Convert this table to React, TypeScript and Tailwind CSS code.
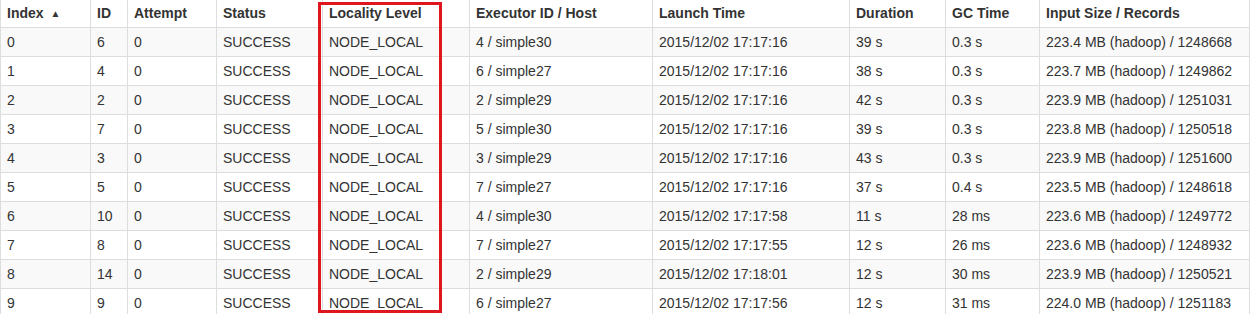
const headers = [
  'Index',
  'ID',
  'Attempt',
  'Status',
  'Locality Level',
  'Executor ID / Host',
  'Launch Time',
  'Duration',
  'GC Time',
  'Input Size / Records',
];

const widths = [90, 37, 89, 106, 147, 183, 197, 96, 94, 210];

const rows: string[][] = [
  ['0', '6', '0', 'SUCCESS', 'NODE_LOCAL', '4 / simple30', '2015/12/02 17:17:16', '39 s', '0.3 s', '223.4 MB (hadoop) / 1248668'],
  ['1', '4', '0', 'SUCCESS', 'NODE_LOCAL', '6 / simple27', '2015/12/02 17:17:16', '38 s', '0.3 s', '223.7 MB (hadoop) / 1249862'],
  ['2', '2', '0', 'SUCCESS', 'NODE_LOCAL', '2 / simple29', '2015/12/02 17:17:16', '42 s', '0.3 s', '223.9 MB (hadoop) / 1251031'],
  ['3', '7', '0', 'SUCCESS', 'NODE_LOCAL', '5 / simple30', '2015/12/02 17:17:16', '39 s', '0.3 s', '223.8 MB (hadoop) / 1250518'],
  ['4', '3', '0', 'SUCCESS', 'NODE_LOCAL', '3 / simple29', '2015/12/02 17:17:16', '43 s', '0.3 s', '223.9 MB (hadoop) / 1251600'],
  ['5', '5', '0', 'SUCCESS', 'NODE_LOCAL', '7 / simple27', '2015/12/02 17:17:16', '37 s', '0.4 s', '223.5 MB (hadoop) / 1248618'],
  ['6', '10', '0', 'SUCCESS', 'NODE_LOCAL', '4 / simple30', '2015/12/02 17:17:58', '11 s', '28 ms', '223.6 MB (hadoop) / 1249772'],
  ['7', '8', '0', 'SUCCESS', 'NODE_LOCAL', '7 / simple27', '2015/12/02 17:17:55', '12 s', '26 ms', '223.6 MB (hadoop) / 1248932'],
  ['8', '14', '0', 'SUCCESS', 'NODE_LOCAL', '2 / simple29', '2015/12/02 17:18:01', '12 s', '30 ms', '223.9 MB (hadoop) / 1250521'],
  ['9', '9', '0', 'SUCCESS', 'NODE_LOCAL', '6 / simple27', '2015/12/02 17:17:56', '12 s', '31 ms', '224.0 MB (hadoop) / 1251183'],
];

export default function App() {
  return (
    <div className="relative h-[314px] w-[1250px] overflow-hidden bg-white font-['Liberation_Sans',Arial,sans-serif] text-[14px] leading-5 text-[#333]">
      <table className="w-[1250px] table-fixed border-collapse">
        <colgroup>
          {widths.map((w, i) => (
            <col key={i} style={{ width: w }} />
          ))}
        </colgroup>
        <thead>
          <tr className="h-[27px]">
            {headers.map((h, i) => (
              <th
                key={h}
                className="border-x border-b border-[#ddd] px-[6px] py-0 text-left align-middle font-bold whitespace-nowrap"
              >
                {h}
                {i === 0 && <span className="ml-[7px] text-[10px] align-[1px]">▲</span>}
              </th>
            ))}
          </tr>
        </thead>
        <tbody>
          {rows.map((r, ri) => (
            <tr key={ri} className={ri % 2 === 0 ? 'h-[29px] bg-[#f9f9f9]' : 'h-[29px] bg-white'}>
              {r.map((c, ci) => (
                <td
                  key={ci}
                  className="border border-[#ddd] px-[6px] py-0 align-middle whitespace-nowrap"
                >
                  {c}
                </td>
              ))}
            </tr>
          ))}
        </tbody>
      </table>

      {/* annotation box round the Locality Level column */}
      <div className="pointer-events-none absolute left-[318px] top-[2px] h-[311px] w-[124px] border-[3px] border-[#e0161f]" />
    </div>
  );
}
